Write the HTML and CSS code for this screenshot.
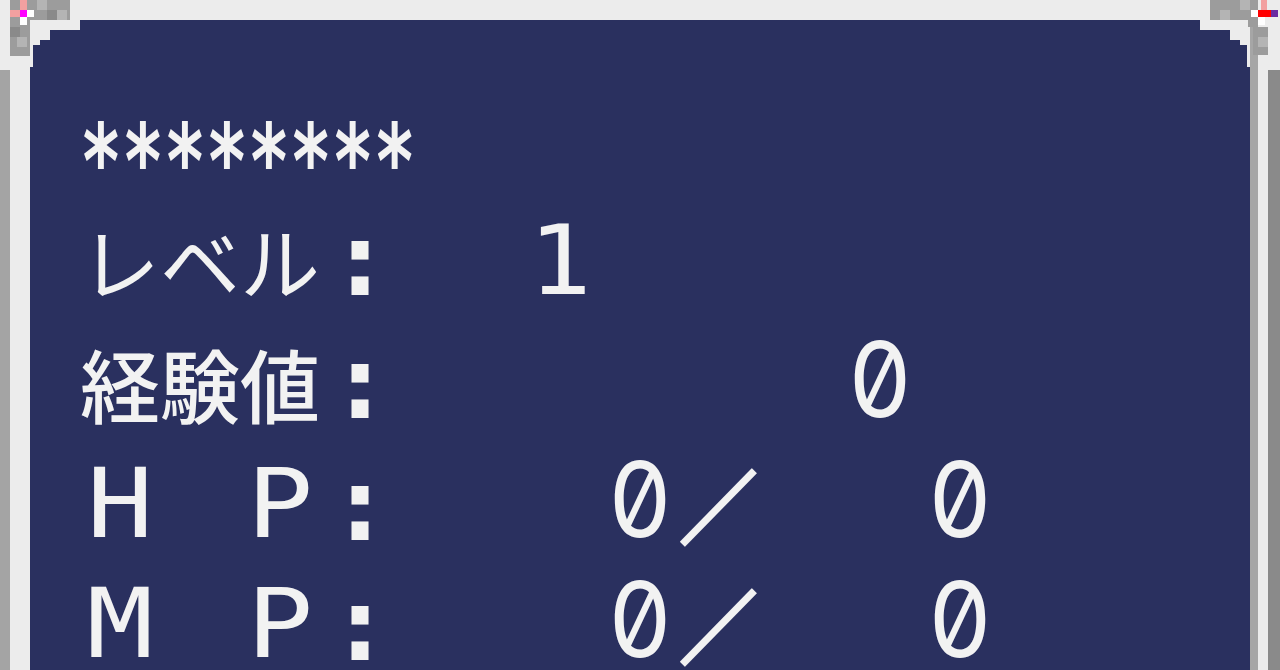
FILE: index.html
```html
<!DOCTYPE html>
<html lang="ja">
<head>
<meta charset="utf-8">
<title>ステータス</title>
<link rel="stylesheet" href="styles.css">
</head>
<body>
<div class="screen">
  <div class="frame">
    <svg class="corner corner-tl" width="72" height="70" viewBox="0 0 72 70" aria-hidden="true">
      <rect x="0" y="0" width="10" height="70" fill="#ececec"/>
      <rect x="10" y="0" width="60" height="20" fill="#9c9c9c"/>
      <rect x="10" y="20" width="20" height="36" fill="#9c9c9c"/>
      <rect x="37" y="0" width="10" height="10" fill="#b4b4b4"/>
      <rect x="57" y="10" width="10" height="10" fill="#b4b4b4"/>
      <rect x="17" y="37" width="10" height="10" fill="#b4b4b4"/>
      <rect x="47" y="10" width="10" height="10" fill="#8a8a8a"/>
      <rect x="10" y="27" width="10" height="10" fill="#8a8a8a"/>
      <rect x="20" y="0" width="7" height="10" fill="#f2a0a0"/>
      <rect x="10" y="10" width="10" height="7" fill="#f2a0a0"/>
      <rect x="20" y="10" width="7" height="7" fill="#ff00ff"/>
      <rect x="27" y="10" width="7" height="7" fill="#ffffff"/>
      <rect x="20" y="17" width="7" height="8" fill="#ffffff"/>
    </svg>
    <svg class="corner corner-tr" width="72" height="70" viewBox="0 0 72 70" aria-hidden="true">
      <rect x="60" y="0" width="12" height="70" fill="#ececec"/>
      <rect x="2" y="0" width="48" height="20" fill="#9c9c9c"/>
      <rect x="45" y="27" width="15" height="28" fill="#9c9c9c"/>
      <rect x="40" y="17" width="10" height="10" fill="#9c9c9c"/>
      <rect x="12" y="10" width="10" height="10" fill="#b4b4b4"/>
      <rect x="32" y="0" width="10" height="10" fill="#b4b4b4"/>
      <rect x="50" y="37" width="10" height="10" fill="#b4b4b4"/>
      <rect x="53" y="0" width="6" height="10" fill="#f2a0a0"/>
      <rect x="50" y="10" width="13" height="7" fill="#ff0000"/>
      <rect x="63" y="10" width="7" height="7" fill="#6a2aa0"/>
      <rect x="43" y="10" width="7" height="7" fill="#ffffff"/>
      <rect x="50" y="17" width="7" height="8" fill="#ffffff"/>
    </svg>
    <div class="well">
      <section class="panel">
        <div class="row"><span class="stars">********</span></div>
        <div class="row">
          <span class="label"><span class="kana">レベル</span><span class="colon">:</span></span><span class="field f-lv"><span class="num one">1</span></span>
        </div>
        <div class="row">
          <span class="label"><span class="kana kanji">経験値</span><span class="colon">:</span></span><span class="field f-exp"><span class="num">0</span></span>
        </div>
        <div class="row">
          <span class="label"><span class="lat">H</span><span class="lat">　</span><span class="lat">P</span><span class="colon">:</span></span><span class="field f-cur"><span class="num">0</span></span><span class="slash">／</span><span class="field f-max"><span class="num">0</span></span>
        </div>
        <div class="row">
          <span class="label"><span class="lat">M</span><span class="lat">　</span><span class="lat">P</span><span class="colon">:</span></span><span class="field f-cur"><span class="num">0</span></span><span class="slash">／</span><span class="field f-max"><span class="num">0</span></span>
        </div>
      </section>
    </div>
  </div>
</div>
</body>
</html>
```
FILE: styles.css
```css
html, body {
  margin: 0;
  padding: 0;
  background: #ececec;
}

.screen {
  width: 1280px;
  height: 670px;
  overflow: hidden;
  background: #ececec;
}

.frame {
  position: relative;
  box-sizing: border-box;
  display: flex;
  height: 100%;
  border-left: 10px solid #a4a4a4;
  border-right: 12px solid #8a8a8a;
  padding: 20px 10px 0 20px;
  background: #ececec;
}

.corner {
  position: absolute;
  top: 0;
  z-index: 2;
}

.corner-tl {
  left: -10px;
}

.corner-tr {
  right: -12px;
}

.well {
  flex: 1;
  display: flex;
  border-right: 8px solid #a6a6a6;
}

.panel {
  flex: 1;
  box-sizing: border-box;
  padding: 59px 0 0 50px;
  background: #2a305f;
  color: #f2f2f2;
  font-family: "Noto Sans CJK JP", sans-serif;
  font-size: 80px;
  clip-path: polygon(0 47px, 3px 47px, 3px 25px, 10px 25px, 10px 20px, 20px 20px, 20px 10px, 50px 10px, 50px 0,
    calc(100% - 50px) 0, calc(100% - 50px) 10px, calc(100% - 20px) 10px, calc(100% - 20px) 20px,
    calc(100% - 10px) 20px, calc(100% - 10px) 25px, calc(100% - 3px) 25px, calc(100% - 3px) 47px,
    100% 47px, 100% 100%, 0 100%);
}

.row {
  height: 120px;
  line-height: 120px;
  white-space: nowrap;
}

.stars {
  display: inline-block;
  font-family: "DejaVu Sans Mono", monospace;
  font-weight: bold;
  font-size: 66.4px;
  line-height: 66px;
  vertical-align: -15px;
  transform: scale(1.05, 1.55);
  transform-origin: 0 60%;
}

.label {
  display: inline-flex;
  width: 320px;
}

.kana {
  width: 240px;
}

.kanji {
  font-weight: 500;
}

.lat {
  width: 80px;
  text-align: center;
  font-family: "DejaVu Sans Mono", monospace;
  font-size: 96px;
  line-height: 120px;
  transform: scaleX(1.15);
}

.colon {
  width: 80px;
  text-align: center;
  font-family: "DejaVu Sans Mono", monospace;
  font-weight: bold;
  font-size: 104px;
  line-height: 120px;
}

.field {
  display: inline-block;
  text-align: right;
}

.f-lv { width: 200px; }
.f-exp { width: 520px; }
.f-cur { width: 280px; }
.f-max { width: 240px; }

.num {
  display: inline-block;
  width: 80px;
  text-align: center;
  font-family: "Inter", sans-serif;
  font-variant-numeric: slashed-zero tabular-nums;
  font-feature-settings: "zero" 1, "tnum" 1;
  font-size: 104px;
  font-weight: 400;
  transform: scaleX(0.95);
}

.num.one {
  font-family: "DejaVu Sans Mono", monospace;
  font-size: 96px;
  transform: scaleX(1.1);
}

.slash {
  display: inline-block;
  width: 80px;
  text-align: left;
  font-family: "Noto Sans CJK JP", sans-serif;
  font-size: 80px;
  -webkit-text-stroke: 4px #f2f2f2;
  transform: scale(0.96, 0.98);
  transform-origin: 0 79%;
}
```
